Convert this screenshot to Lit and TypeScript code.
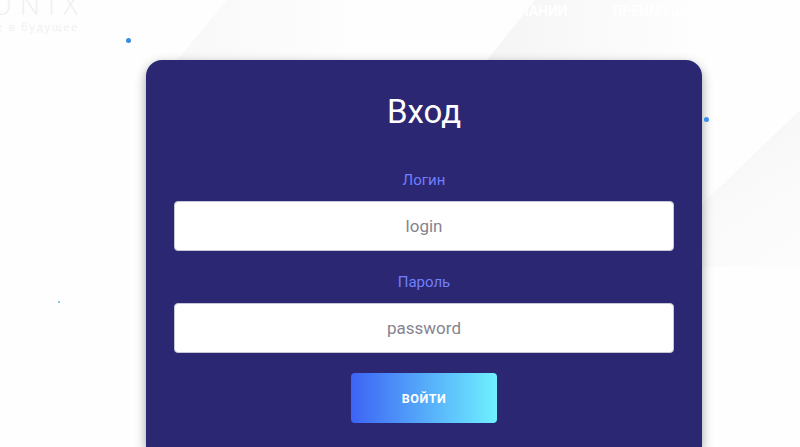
import { LitElement, html, css, svg } from "lit";
import { customElement } from "lit/decorators.js";

@customElement("app-root")
export class AppRoot extends LitElement {
  static styles = css`
    :host {
      display: block;
      position: relative;
      width: 800px;
      height: 447px;
      overflow: hidden;
      background: #fefefe;
      font-family: Roboto, "Liberation Sans", sans-serif;
    }
    .bg { position: absolute; inset: 0; width: 800px; height: 447px; }
    .dot { position: absolute; border-radius: 50%; }
    .d1 { left: 126px; top: 38px; width: 5px; height: 5px; background: #3a8be0; }
    .d2 { left: 704px; top: 117px; width: 5px; height: 5px; background: #3f9dff; }
    .d3 { left: 58px; top: 301px; width: 2px; height: 2px; background: #5fb4d8; }
    .page { position: relative; display: flex; flex-direction: column; height: 447px; }
    header { display: flex; align-items: flex-start; height: 60px; flex: none; }
    .logo {
      display: flex; flex-direction: column; align-items: flex-end;
      width: 78px; flex: none; margin-top: -10px;
      color: #f0f0f0; line-height: 1; white-space: nowrap;
      font-family: "Open Sans", sans-serif;
    }
    .logo .name { font-size: 28px; font-weight: 300; letter-spacing: 8px; margin-right: -8px; }
    .logo .tag { font-size: 11px; letter-spacing: 1.7px; margin-top: 3px; margin-right: -1px; }
    nav {
      display: flex; gap: 45px; margin: 5px 0 0 410px;
      color: #fff; font-size: 14px; font-weight: 700; line-height: 13px; white-space: nowrap;
    }
    .card {
      flex: 1;
      margin: 0 98px 0 146px;
      background: #2c2772;
      border-radius: 16px 16px 0 0;
      box-shadow: 0 4px 11px rgba(0, 0, 0, 0.38);
      padding: 0 28px;
      display: flex;
      flex-direction: column;
      align-items: center;
    }
    h1 {
      margin: 32px 0 0;
      font-size: 33px; line-height: 40px; font-weight: 400; color: #fff;
    }
    label {
      display: block;
      color: #6f7fff;
      font-size: 15px; line-height: 18px;
    }
    .l1 { margin-top: 39px; }
    .l2 { margin-top: 22px; }
    .field {
      box-sizing: border-box;
      width: 100%; height: 50px; margin-top: 12px; flex: none;
      background: #fff;
      border: 1px solid #c6c5d6;
      border-radius: 4px;
      display: flex; align-items: center; justify-content: center;
      color: #85838f; font-size: 17px;
    }
    .btn {
      box-sizing: border-box;
      width: 146px; height: 50px; margin-top: 20px; flex: none;
      border-radius: 4px;
      background: linear-gradient(90deg, #3d63f4, #6ef1ff);
      display: flex; align-items: center; justify-content: center;
      color: #fff; font-size: 12.5px; font-weight: 700; letter-spacing: 0.5px;
    }
  `;

  render() {
    return html`
      <svg class="bg" viewBox="0 0 800 447">
        <defs>
          <linearGradient id="g1" gradientUnits="userSpaceOnUse" x1="490" y1="0" x2="700" y2="0">
            <stop offset="0" stop-color="#f5f5f5" />
            <stop offset="1" stop-color="#fefefe" />
          </linearGradient>
          <linearGradient id="g0" gradientUnits="userSpaceOnUse" x1="177" y1="0" x2="360" y2="0">
            <stop offset="0" stop-color="#f8f8f8" />
            <stop offset="1" stop-color="#fefefe" />
          </linearGradient>
          <linearGradient id="g2" gradientUnits="userSpaceOnUse" x1="710" y1="120" x2="800" y2="267">
            <stop offset="0" stop-color="#f6f6f6" />
            <stop offset="1" stop-color="#fdfdfd" />
          </linearGradient>
        </defs>
        ${svg`<polygon points="487,60 535,0 740,0 680,60" fill="url(#g1)" />
              <polygon points="177,60 227,0 400,0 340,60" fill="url(#g0)" />
              <polygon points="702,204 800,110 800,267 702,267" fill="url(#g2)" />`}
      </svg>
      <div class="dot d1"></div>
      <div class="dot d2"></div>
      <div class="dot d3"></div>
      <div class="page">
        <header>
          <div class="logo">
            <div class="name">ONIX</div>
            <div class="tag">е в будущее</div>
          </div>
          <nav><span>КОМПАНИИ</span><span>ПРЕИМУЩЕСТВА</span></nav>
        </header>
        <main class="card">
          <h1>Вход</h1>
          <label class="l1">Логин</label>
          <div class="field">login</div>
          <label class="l2">Пароль</label>
          <div class="field">password</div>
          <div class="btn">ВОЙТИ</div>
        </main>
      </div>
    `;
  }
}
